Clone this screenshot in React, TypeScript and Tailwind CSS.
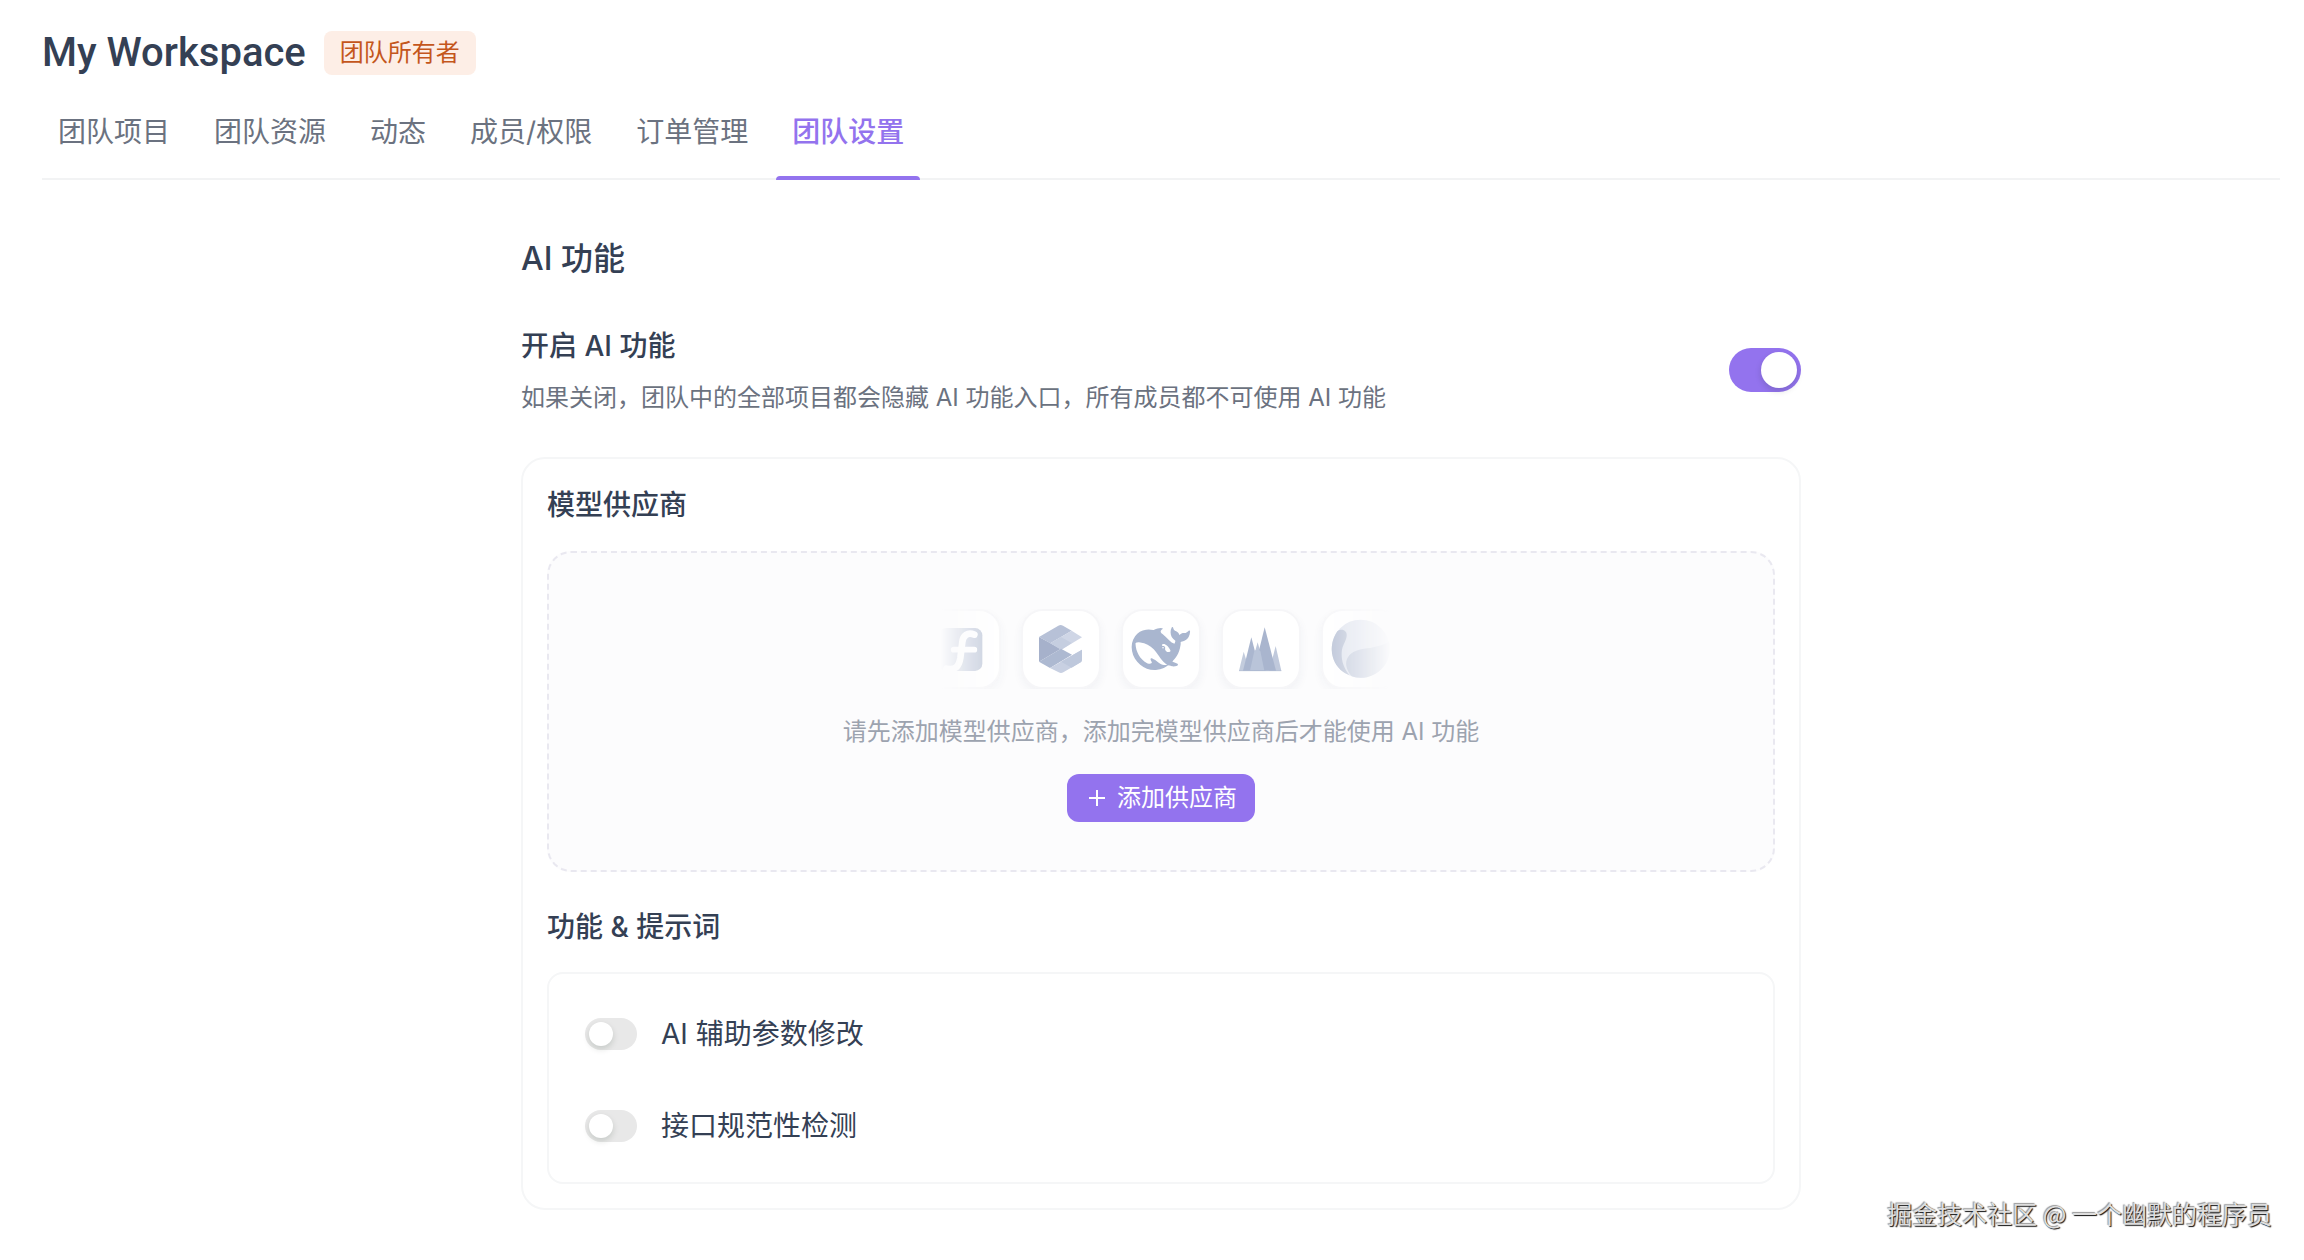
import { useState, type ReactNode } from 'react'
import { clsx } from 'clsx'

const TABS = ['团队项目', '团队资源', '动态', '成员/权限', '订单管理', '团队设置']

const FEATURES = [
  { id: 'param-edit', label: 'AI 辅助参数修改' },
  { id: 'api-lint', label: '接口规范性检测' },
]

interface SwitchProps {
  id: string
  checked: boolean
  onChange: (checked: boolean) => void
  size?: 'sm' | 'lg'
}

function Switch({ id, checked, onChange, size = 'sm' }: SwitchProps) {
  return (
    <input
      id={id}
      type="checkbox"
      role="switch"
      checked={checked}
      onChange={e => onChange(e.target.checked)}
      className={clsx(
        'flex shrink-0 cursor-pointer appearance-none items-center rounded-full p-1 transition-colors',
        "before:block before:rounded-full before:bg-white before:shadow-[0_3px_6px_rgba(0,35,11,0.15)] before:content-['']",
        size === 'lg' ? 'h-11 w-[72px] before:size-9' : 'h-8 w-[52px] before:size-6',
        checked ? 'justify-end bg-[#9373ee]' : 'justify-start bg-[#e8e8e8]'
      )}
    />
  )
}

function Tile({ children }: { children: ReactNode }) {
  return (
    <div className="size-20 shrink-0 overflow-hidden rounded-[22px] border-2 border-[#f6f6f8] bg-white shadow-[0_4px_10px_rgba(40,50,90,0.05)]">
      <svg viewBox="6 6 228 228" className="size-full" aria-hidden="true">
        {children}
      </svg>
    </div>
  )
}

function ProviderLogos() {
  return (
    <div className="flex gap-5 mask-[linear-gradient(to_right,transparent_4%,black_19%,black_82%,transparent_98%)]">
      <Tile>
        <rect x="54" y="57" width="130" height="129" rx="22" fill="#b3bdd2" />
        <path
          d="M160 77c-20-8-34 2-36 22l-6 48c-4 26-16 38-42 32"
          fill="none"
          stroke="#fff"
          strokeWidth="20"
          strokeLinecap="round"
        />
        <path d="M98 122h62" stroke="#fff" strokeWidth="17" strokeLinecap="round" />
      </Tile>
      <Tile>
        <path d="M54 84l66 35-66 39z" fill="#a6b1cb" />
        <path d="M54 84l58-34q7-4 14 0l26 15-64 38z" fill="#b7c1d7" />
        <path d="M88 103l64-38 31 20-62 37z" fill="#cfd6e6" />
        <path d="M88 103l32-19 32 18-31 20z" fill="#c5cee0" />
        <path d="M54 158l66-39 33 18-66 40z" fill="#adb9d1" />
        <path d="M87 177l96-55v30q0 5-4 8l-52 30q-7 4-14 0z" fill="#c8d0e2" />
        <path d="M120 158l63-36v30q0 5-4 8l-27 16z" fill="#bec8dc" />
      </Tile>
      <Tile>
        <g transform="translate(32 32) scale(7.3)" fill="#a9b6cf">
          <path d="M23.748 4.482c-.254-.124-.364.113-.512.234-.051.039-.094.09-.137.136-.372.397-.806.657-1.373.626-.829-.046-1.537.214-2.163.848-.133-.782-.575-1.248-1.247-1.548-.352-.156-.708-.311-.955-.65-.172-.241-.219-.51-.305-.774-.055-.16-.11-.323-.293-.35-.2-.031-.278.136-.356.276-.313.572-.434 1.202-.422 1.84.027 1.436.633 2.58 1.838 3.393.137.093.172.187.129.323-.082.28-.18.552-.266.833-.055.179-.137.217-.329.14a5.526 5.526 0 01-1.736-1.18c-.857-.828-1.631-1.742-2.597-2.458a11.365 11.365 0 00-.689-.471c-.985-.957.13-1.743.388-1.836.27-.098.093-.432-.779-.428-.872.004-1.67.295-2.687.684a3.055 3.055 0 01-.465.137 9.597 9.597 0 00-2.883-.102c-1.885.21-3.39 1.102-4.497 2.623C.082 8.606-.231 10.684.152 12.85c.403 2.284 1.569 4.175 3.36 5.653 1.858 1.533 3.997 2.284 6.438 2.14 1.482-.085 3.133-.284 4.994-1.86.47.234.962.327 1.78.397.63.059 1.236-.03 1.705-.128.735-.156.684-.837.419-.961-2.155-1.004-1.682-.595-2.113-.926 1.096-1.296 2.746-2.642 3.392-7.003.05-.347.007-.565 0-.845-.004-.17.035-.237.23-.256a4.173 4.173 0 001.545-.475c1.396-.763 1.96-2.015 2.093-3.517.02-.23-.004-.467-.247-.588zM11.581 18c-2.089-1.642-3.102-2.183-3.52-2.16-.392.024-.321.471-.235.763.09.288.207.486.371.739.114.167.192.416-.113.603-.673.416-1.842-.14-1.897-.167-1.361-.802-2.5-1.86-3.301-3.307-.774-1.393-1.224-2.887-1.298-4.482-.02-.386.093-.522.477-.592a4.696 4.696 0 011.529-.039c2.132.312 3.946 1.265 5.468 2.774.868.86 1.525 1.887 2.202 2.891.72 1.066 1.494 2.082 2.48 2.914.348.292.625.514.891.677-.802.09-2.14.11-3.054-.614zm1-6.44a.306.306 0 01.415-.287.302.302 0 01.2.288.306.306 0 01-.31.307.303.303 0 01-.304-.308zm3.11 1.596c-.2.081-.399.151-.59.16a1.245 1.245 0 01-.798-.254c-.274-.23-.47-.358-.552-.758a1.73 1.73 0 01.016-.588c.07-.327-.008-.537-.239-.727-.187-.156-.426-.199-.688-.199a.559.559 0 01-.254-.078c-.11-.054-.2-.19-.114-.358.028-.054.16-.186.192-.21.356-.202.767-.136 1.146.016.352.144.618.408 1.001.782.391.451.462.576.685.914.176.265.336.537.445.848.067.195-.019.354-.25.452z" />
        </g>
      </Tile>
      <Tile>
        <path d="M68 128l18 57H54z" fill="#c3ccdd" />
        <path d="M164 111l17 74h-36z" fill="#c0c9dc" />
        <path d="M110 100l24 85H86z" fill="#bcc6da" />
        <path d="M91 85l26 100H66z" fill="#aab6cf" />
        <path d="M131 55l34 130H99z" fill="#a9b5ce" />
        <path d="M100 126q10-7 18 0l12 59H87z" fill="#b9c4d9" />
        <path d="M54 185h127" stroke="#a9b5ce" strokeWidth="2" />
      </Tile>
      <Tile>
        <circle cx="119" cy="119" r="87" fill="#dde2ed" />
        <path d="M49 67c14-10 30-2 28 14-2 18-14 28-15 50-1 28 8 48 24 68C30 178 18 112 49 67z" fill="#b3bdd2" />
        <path d="M92 202c-18-22-20-42-12-56 12-20 34-24 58-28 26-4 50-10 66-20a87 87 0 0 1-112 104z" fill="#bcc5d8" />
      </Tile>
    </div>
  )
}

export default function App() {
  const [activeTab, setActiveTab] = useState('团队设置')
  const [aiEnabled, setAiEnabled] = useState(true)
  const [features, setFeatures] = useState<Record<string, boolean>>({})

  return (
    <div className="relative min-h-screen bg-white pt-[31px] pr-6 pb-12 pl-[42px] font-[Inter,'Noto_Sans_CJK_SC',sans-serif] text-[#344054]">
      <header>
        <div className="flex items-center gap-[18px]">
          <h1 className="font-[Roboto,sans-serif] text-[40px] leading-[44px] font-medium">My Workspace</h1>
          <span className="rounded-lg bg-[#fdeee6] px-4 text-2xl leading-[44px] text-[#c4561c]">团队所有者</span>
        </div>

        <nav className="mt-[37px] flex gap-3 border-b-2 border-[#f2f3f4]">
          {TABS.map(tab => (
            <a
              key={tab}
              href="#"
              onClick={() => setActiveTab(tab)}
              className={clsx(
                '-mb-0.5 px-4 text-[28px] leading-10',
                tab === activeTab ? 'font-medium text-[#9373ee]' : 'text-[#6b7280]'
              )}
            >
              {tab}
              <span className={clsx('-mx-4 mt-6 block h-1 rounded-t-sm', tab === activeTab && 'bg-[#9373ee]')} />
            </a>
          ))}
        </nav>
      </header>

      <main className="mx-auto mt-[59px] max-w-[1280px]">
        <h2 className="text-[32px] leading-10 font-medium">AI 功能</h2>

        <div className="mt-[47px] flex items-center justify-between">
          <div>
            <label htmlFor="ai-enabled" className="block text-[28px] leading-10 font-medium">
              开启 AI 功能
            </label>
            <p className="mt-4 text-2xl leading-8 text-[#6b7280]">
              如果关闭，团队中的全部项目都会隐藏 AI 功能入口，所有成员都不可使用 AI 功能
            </p>
          </div>
          <Switch id="ai-enabled" size="lg" checked={aiEnabled} onChange={setAiEnabled} />
        </div>

        <section className="mt-[43px] rounded-3xl border-2 border-[#f5f6f7] px-6 pt-[26px] pb-6">
          <h3 className="text-[28px] leading-10 font-medium">模型供应商</h3>

          {/* 空状态 */}
          <div className="mt-[26px] flex flex-col items-center rounded-3xl border-2 border-dashed border-[#e9e8f0] bg-[#fcfcfd] pt-14 pb-12">
            <ProviderLogos />
            <p className="mt-[27px] text-2xl leading-8 text-[#9ca3af]">
              请先添加模型供应商，添加完模型供应商后才能使用 AI 功能
            </p>
            <button
              type="button"
              className="mt-[26px] flex h-12 items-center gap-2.5 rounded-xl bg-[#9373ee] pr-[18px] pl-5 text-2xl text-white"
            >
              <svg viewBox="0 0 20 20" className="size-5" stroke="currentColor" strokeWidth="2" aria-hidden="true">
                <path d="M2 10h16M10 2v16" />
              </svg>
              添加供应商
            </button>
          </div>

          <h3 className="mt-[35px] text-[28px] leading-10 font-medium">功能 &amp; 提示词</h3>

          <div className="mt-[25px] flex flex-col gap-[52px] rounded-2xl border-2 border-[#f5f6f7] px-9 pt-10 pb-9">
            {FEATURES.map(feature => (
              <div key={feature.id} className="flex items-center gap-6">
                <Switch
                  id={feature.id}
                  checked={features[feature.id] ?? false}
                  onChange={checked => setFeatures({ ...features, [feature.id]: checked })}
                />
                <label htmlFor={feature.id} className="text-[28px] leading-10">
                  {feature.label}
                </label>
              </div>
            ))}
          </div>
        </section>
      </main>

      <span className="absolute right-8 bottom-[29px] font-['Noto_Sans_CJK_SC',sans-serif] text-[25px] leading-9 text-[#dedede] [text-shadow:1px_1px_1px_#111,-1px_-1px_1px_#999]">
        掘金技术社区 @ 一个幽默的程序员
      </span>
    </div>
  )
}
